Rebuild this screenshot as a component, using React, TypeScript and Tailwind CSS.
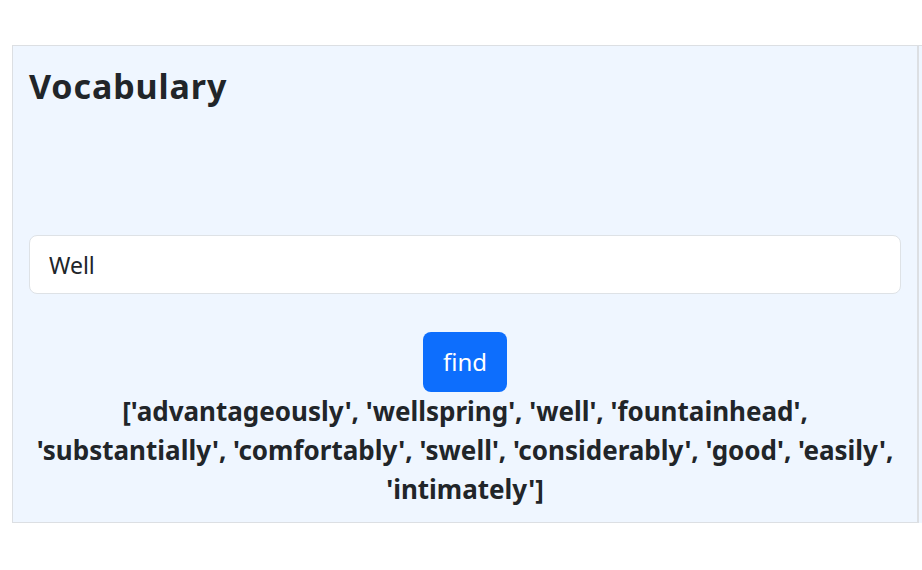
import React from "react";

const words = [
  "advantageously",
  "wellspring",
  "well",
  "fountainhead",
  "substantially",
  "comfortably",
  "swell",
  "considerably",
  "good",
  "easily",
  "intimately",
];

export default function App() {
  const result = "[" + words.map((w) => `'${w}'`).join(", ") + "]";

  return (
    <div
      className="w-[922px] h-[570px] bg-white overflow-hidden pt-[45px] pl-[12px] flex text-[#212529]"
      style={{ fontFamily: '"Noto Sans", "Open Sans", sans-serif' }}
    >
      <div className="w-[907px] h-[478px] bg-[#eff6ff] border border-[#dcdfe3] border-r-2 px-[16px] pt-[20px]">
        <h2 className="text-[34px] font-bold leading-[41px] tracking-[0.9px]">Vocabulary</h2>

        <div className="mt-[128px]">
          <input
            readOnly
            value="Well"
            className="w-full h-[59px] bg-white border border-[#dee2e6] rounded-[8px] px-[19px] text-[23px] outline-none text-[#212529]"
          />
        </div>

        <div className="flex justify-center mt-[38px]">
          <button className="w-[84px] h-[60px] bg-[#0d6efd] text-white rounded-[8px] text-[24px]">
            find
          </button>
        </div>

        <h4 className="text-center font-bold text-[26px] leading-[39px] mt-[0px] px-[4px]">
          {result}
        </h4>
      </div>
      <div className="w-[3px] h-[478px] bg-[#eff6ff] border-t border-[#dcdfe3]" />
    </div>
  );
}
